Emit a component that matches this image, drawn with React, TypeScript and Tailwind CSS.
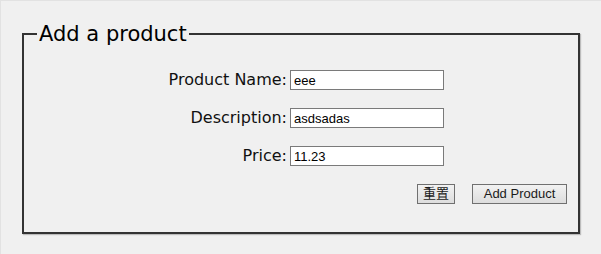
import React from "react";

export default function App() {
  const label = "text-right text-[16px] leading-[20px] text-[#111] [font-family:'DejaVu_Sans',sans-serif]";
  const input =
    "h-[20px] w-[154px] border border-[#7a7a7a] bg-white px-[3px] text-[13px] text-black outline-none [font-family:'Liberation_Sans',Arial,sans-serif]";
  const btn =
    "h-[20px] border border-[#707070] bg-gradient-to-b from-[#f2f2f2] to-[#dddddd] text-[13px] leading-[18px] text-[#1a1a1a] [font-family:'Liberation_Sans','Noto_Sans_CJK_SC',sans-serif]";
  return (
    <div className="h-[254px] w-[601px] overflow-hidden border-l border-t border-[#e2e2e2] bg-[#f0f0f0] pl-[21px] pt-[20px]">
      <fieldset className="m-0 w-[558px] border-2 border-[#333] p-0 shadow-[1px_1px_1px_#bcbcbc]">
        <legend className="ml-[13px] px-[2px] text-[21px] leading-[26px] text-black [font-family:'DejaVu_Sans',sans-serif]">
          Add a product
        </legend>
        <div className="grid grid-cols-[263px_154px] gap-x-[3px] gap-y-[18px] pt-[23px]">
          <label className={label}>Product Name:</label>
          <input className={input} defaultValue="eee" />
          <label className={label}>Description:</label>
          <input className={input} defaultValue="asdsadas" />
          <label className={label}>Price:</label>
          <input className={input} defaultValue="11.23" />
        </div>
        <div className="mr-[11px] mt-[18px] mb-[28px] flex justify-end gap-[17px]">
          <button className={`${btn} w-[38px]`}>重置</button>
          <button className={`${btn} w-[95px]`}>Add Product</button>
        </div>
      </fieldset>
    </div>
  );
}
